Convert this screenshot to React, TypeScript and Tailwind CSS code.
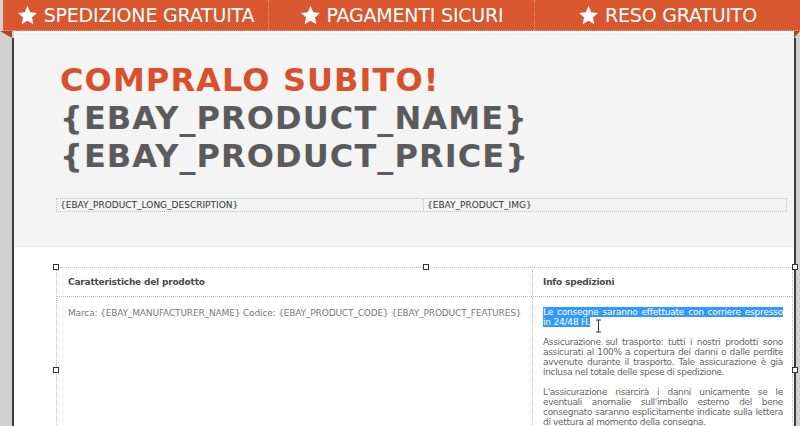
const Star = () => (
  <svg viewBox="0 0 24 24" className="h-[21px] w-[21px] fill-white">
    <path d="M12 1.2l3.2 7.1 7.6.8-5.7 5.2 1.6 7.6L12 18l-6.7 3.9 1.6-7.6L1.2 9.1l7.6-.8z" />
  </svg>
)

const Handle = ({ className }: { className: string }) => (
  <div className={`absolute h-[6px] w-[6px] border border-[#333] bg-white ${className}`} />
)

const badges = ['SPEDIZIONE GRATUITA', 'PAGAMENTI SICURI', 'RESO GRATUITO']

export default function App() {
  return (
    <div className="flex h-[426px] w-[800px] flex-col overflow-hidden bg-[#d3d3d3] font-['DejaVu_Sans',sans-serif]">
      {/* Orange badge bar */}
      <div className="ml-[3px] flex h-[31px] shrink-0 border-b border-dotted border-[#f1a286] bg-[#d9572f]">
        {badges.map((b, i) => (
          <div
            key={b}
            className={`flex flex-1 items-center justify-center gap-[6px] text-[19px] leading-none tracking-[-0.2px] text-white ${
              i < 2 ? 'border-r border-dotted border-[#eb8f70]' : ''
            }`}
          >
            <Star />
            <span>{b}</span>
          </div>
        ))}
      </div>

      <div className="flex flex-1">
        {/* left gutter */}
        <div className="flex w-[14px] flex-col">
          <div className="h-0 w-0 border-l-[12px] border-t-[7px] border-l-transparent border-t-[#b5421f]" />
          <div className="flex-1 border-r-2 border-[#3c3c3c] bg-[#d0d0d0]" />
        </div>

        {/* editor canvas */}
        <div className="flex w-[780px] flex-col">
          <div className="h-[215px] border-t-2 border-white bg-[#f4f4f4]">
            <div className="pl-[46px] pt-[28px] text-[32px] font-bold leading-[38px] tracking-[1.1px]">
              <div className="text-[#d9502a]">COMPRALO SUBITO!</div>
              <div className="text-[#5b5b5b]">{'{EBAY_PRODUCT_NAME}'}</div>
              <div className="text-[#5b5b5b]">{'{EBAY_PRODUCT_PRICE}'}</div>
            </div>
            <div className="ml-[42px] mt-[23px] flex h-[14px] w-[731px] border border-dotted border-[#bdbdbd] text-[9px] leading-[12px] text-[#333]">
              <div className="w-[367px] border-r border-dotted border-[#bdbdbd] pl-[3px]">{'{EBAY_PRODUCT_LONG_DESCRIPTION}'}</div>
              <div className="flex-1 pl-[3px]">{'{EBAY_PRODUCT_IMG}'}</div>
            </div>
          </div>

          <div className="flex-1 border-t border-[#e6e6e6] bg-white pt-[20px]">
            <div className="relative ml-[42px] w-[737px] border-l border-r border-t border-dotted border-[#bdbdbd] text-[9px]">
              <Handle className="-left-[4px] -top-[4px]" />
              <Handle className="left-[366px] -top-[4px]" />
              <Handle className="-right-[6px] -top-[4px]" />
              <Handle className="-left-[4px] top-[99px]" />
              <Handle className="-right-[6px] top-[99px]" />

              <div className="flex h-[29px] border-b border-dotted border-[#bdbdbd] pt-[2px] font-bold tracking-[-0.2px] text-[#4a4a4a]">
                <div className="flex w-[475px] items-center pl-[11px]">Caratteristiche del prodotto</div>
                <div className="flex flex-1 items-center border-l border-dotted border-[#bdbdbd] pl-[10px]">Info spedizioni</div>
              </div>

              <div className="flex leading-[10px]">
                <div className="w-[475px] pl-[11px] pt-[11px] tracking-[-0.15px] text-[#7a7a7a]">
                  Marca: {'{EBAY_MANUFACTURER_NAME}'} Codice: {'{EBAY_PRODUCT_CODE}'} {'{EBAY_PRODUCT_FEATURES}'}
                </div>
                <div className="relative h-[140px] flex-1 border-l border-dotted border-[#bdbdbd] pl-[10px] pr-[9px] pt-[10px] text-justify tracking-[-0.32px] text-[#666]">
                  <p className="tracking-[-0.2px]">
                    <span className="bg-[#3399ff] text-white">Le consegne saranno effettuate con corriere espresso in 24/48 H.</span>
                  </p>
                  <p className="mt-[10px]">
                    Assicurazione sul trasporto: tutti i nostri prodotti sono assicurati al 100% a copertura dei danni o dalle perdite avvenute durante il trasporto. Tale assicurazione è già inclusa nel totale delle spese di spedizione.
                  </p>
                  <p className="mt-[10px]">
                    L'assicurazione risarcirà i danni unicamente se le eventuali anomalie sull'imballo esterno del bene consegnato saranno esplicitamente indicate sulla lettera di vettura al momento della consegna.
                  </p>
                  {/* text cursor */}
                  <svg viewBox="0 0 7 14" className="absolute left-[62px] top-[22px] h-[14px] w-[7px] stroke-[#333]" fill="none">
                    <path d="M1 1h5M3.5 1v12M1 13h5" />
                  </svg>
                </div>
              </div>
            </div>
          </div>
        </div>

        {/* right gutter */}
        <div className="flex w-[6px] flex-col">
          <div className="h-0 w-0 border-r-[6px] border-t-[7px] border-r-transparent border-t-[#b5421f]" />
          <div className="flex-1 border-l-2 border-[#3c3c3c] bg-[#d0d0d0]" />
        </div>
      </div>
    </div>
  )
}
